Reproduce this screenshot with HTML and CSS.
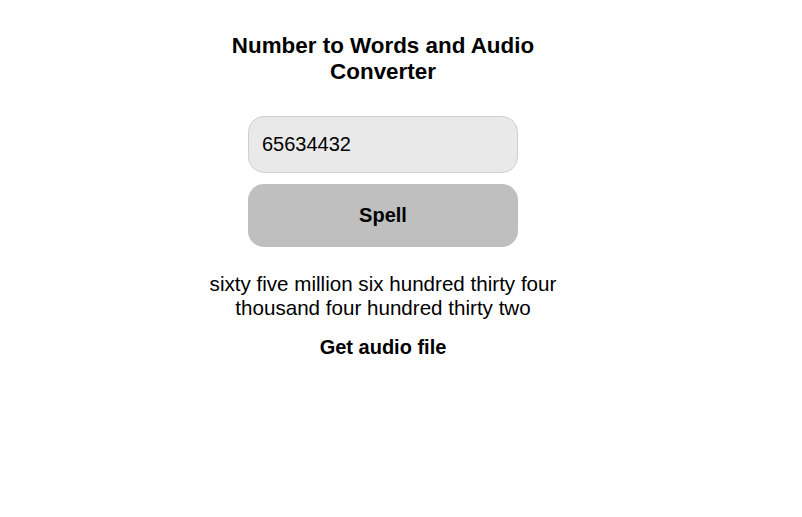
FILE: index.html
```html
<!DOCTYPE html>
<html>
<head>
<meta charset="utf-8">
<link rel="stylesheet" href="styles.css">
</head>
<body>
<div class="page">
  <div class="app">
    <h1 class="title">Number to Words and Audio Converter</h1>
    <input class="num-input" type="text" value="65634432">
    <button class="spell-btn">Spell</button>
    <p class="words">sixty five million six hundred thirty four thousand four hundred thirty two</p>
    <div class="audio-link">Get audio file</div>
  </div>
</div>
</body>
</html>
```

FILE: styles.css
```css
html, body {
  margin: 0;
  padding: 0;
  background: #ffffff;
}
body {
  padding: 8px;
  font-family: "Liberation Sans", Arial, sans-serif;
  color: #000;
}
.page {
  width: 750px;
  display: flex;
  justify-content: center;
}
.app {
  width: 370px;
  display: flex;
  flex-direction: column;
  align-items: center;
  text-align: center;
}
.title {
  margin: 25px 0 0 0;
  font-size: 22.4px;
  line-height: 26px;
  font-weight: bold;
}
.num-input {
  margin-top: 31px;
  box-sizing: border-box;
  width: 270px;
  height: 57px;
  padding: 0 13px;
  border: 1px solid #d0d0d0;
  border-radius: 16px;
  background: #e9e9e9;
  font-family: "Liberation Sans", Arial, sans-serif;
  font-size: 20px;
  color: #000;
  outline: none;
}
.spell-btn {
  margin-top: 11px;
  box-sizing: border-box;
  width: 270px;
  height: 63px;
  border: none;
  border-radius: 16px;
  background: #bfbfbf;
  font-family: "Liberation Sans", Arial, sans-serif;
  font-size: 20px;
  font-weight: bold;
  color: #000;
}
.words {
  margin: 25px 0 0 0;
  font-size: 20.6px;
  line-height: 24px;
}
.audio-link {
  margin-top: 16px;
  font-size: 20px;
  line-height: 23px;
  font-weight: bold;
}
```
